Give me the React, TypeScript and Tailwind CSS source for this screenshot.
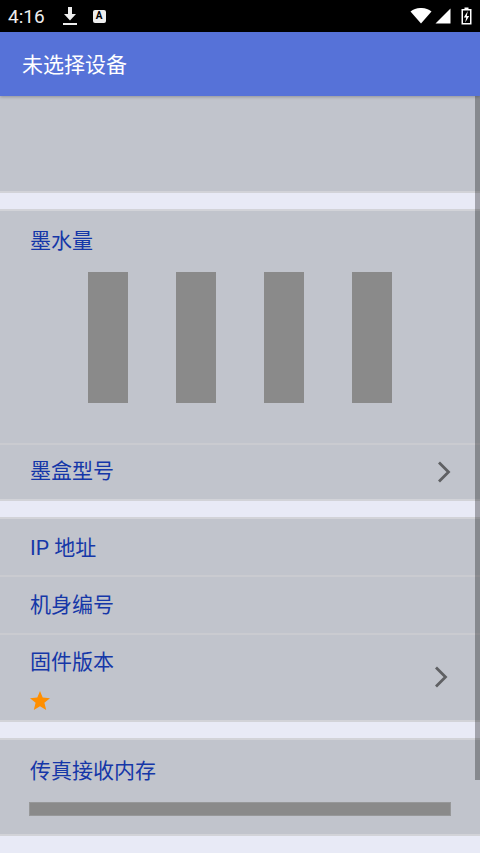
import React from "react";

const font = { fontFamily: '"Roboto","Noto Sans CJK SC",sans-serif' };

function Chevron() {
  return (
    <svg width="14" height="22" viewBox="0 0 14 22" fill="none" className="shrink-0">
      <path d="M2 1.5 L11.5 11 L2 20.5" stroke="#5f6063" strokeWidth="2.8" />
    </svg>
  );
}

function Gap() {
  return <div className="h-[20px] bg-[#e8eaf6] border-y-2 border-[#d2d3d8]" />;
}

function Label({ children }: { children: React.ReactNode }) {
  return <span className="text-[21px] leading-[28px] text-[#1537a8]">{children}</span>;
}

export default function App() {
  return (
    <div className="relative w-[480px] h-[853px] overflow-hidden bg-[#e8eaf6]" style={font}>
      <div className="h-[32px] bg-black flex items-center pl-[8px] pr-[8px] text-white">
        <span className="text-[19px] leading-none text-[#eeeeee]">4:16</span>
        <svg width="16" height="20" viewBox="0 0 16 20" className="ml-[17px]" fill="#eee">
          <path d="M6 1h4v7h4l-6 6.5L2 8h4z" />
          <rect x="1" y="17" width="14" height="2" />
        </svg>
        <div className="ml-[15px] w-[13px] h-[13px] rounded-[2px] bg-[#eee] flex items-center justify-center text-[10px] font-bold text-black leading-none">
          A
        </div>
        <div className="ml-auto flex items-center">
          <svg width="22" height="16" viewBox="0 0 22 16" fill="#fff">
            <path d="M0.5 3.5 C6.5 -1.2 15.5 -1.2 21.5 3.5 L11 15.5 Z" />
          </svg>
          <svg width="16" height="16" viewBox="0 0 16 16" fill="#fff" className="ml-[3px]">
            <path d="M15.5 0.5 V15.5 H0.5 Z" />
          </svg>
          <svg width="11" height="18" viewBox="0 0 11 18" className="ml-[10px] -mt-[1px]">
            <path d="M3.5 0.5h4v1.5H10.5v15.5H0.5V2H3.5z" fill="#fff" />
            <path d="M2 3.5H9V16H2z" fill="#000" />
            <path d="M6.8 4 L2.8 10.5 H5.2 L4.2 15.5 L8.2 9 H5.8 Z" fill="#fff" />
          </svg>
        </div>
      </div>

      <div className="h-[64px] bg-[#5672d8] flex items-center pl-[22px] pt-[3px] text-[21px] text-white shadow-[0_1px_3px_rgba(0,0,0,0.25)] relative z-10">
        未选择设备
      </div>

      <div className="h-[95px] bg-[#c1c4cc]" />
      <Gap />

      <div className="bg-[#c1c4cc]">
        <div className="h-[232px] pl-[30px] pt-[16px] flex flex-col">
          <Label>墨水量</Label>
          <div className="mt-[17px] ml-[58px] flex gap-[48px]">
            <div className="w-[40px] h-[131px] bg-[#8a8a8a]" />
            <div className="w-[40px] h-[131px] bg-[#8a8a8a]" />
            <div className="w-[40px] h-[131px] bg-[#8a8a8a]" />
            <div className="w-[40px] h-[131px] bg-[#8a8a8a]" />
          </div>
        </div>
        <div className="h-[56px] border-t-2 border-[#cacbd0] pl-[30px] pr-[29px] flex items-center justify-between">
          <span className="mb-[2px]">
            <Label>墨盒型号</Label>
          </span>
          <Chevron />
        </div>
      </div>
      <Gap />

      <div className="bg-[#c1c4cc]">
        <div className="h-[56px] pt-[2px] pl-[30px] flex items-center">
          <Label>IP 地址</Label>
        </div>
        <div className="h-[58px] border-t-2 border-[#cacbd0] pl-[30px] flex items-center">
          <Label>机身编号</Label>
        </div>
        <div className="h-[87px] border-t-2 border-[#cacbd0] pl-[30px] pr-[32px] pb-[1px] flex items-center justify-between">
          <div className="flex flex-col self-start pt-[13px]">
            <Label>固件版本</Label>
            <svg width="20" height="19" viewBox="0 0 20 19" className="mt-[15px]" fill="#ff8f00">
              <path d="M10 0 L12.7 6.6 L20 7.2 L14.4 11.8 L16.2 19 L10 15.2 L3.8 19 L5.6 11.8 L0 7.2 L7.3 6.6 Z" />
            </svg>
          </div>
          <Chevron />
        </div>
      </div>
      <Gap />

      <div className="bg-[#c1c4cc] h-[94px] pl-[29px] pr-[29px] pt-[17px]">
        <span className="ml-[1px]">
          <Label>传真接收内存</Label>
        </span>
        <div className="mt-[17px] h-[14px] bg-[#8a8a8a] border border-[#979899]" />
      </div>
      <div className="h-[19px] bg-[#e8eaf6] border-t-2 border-[#d2d3d8]" />

      <div className="absolute right-0 top-[96px] w-[5px] h-[684px] bg-black/30 z-20" />
    </div>
  );
}
